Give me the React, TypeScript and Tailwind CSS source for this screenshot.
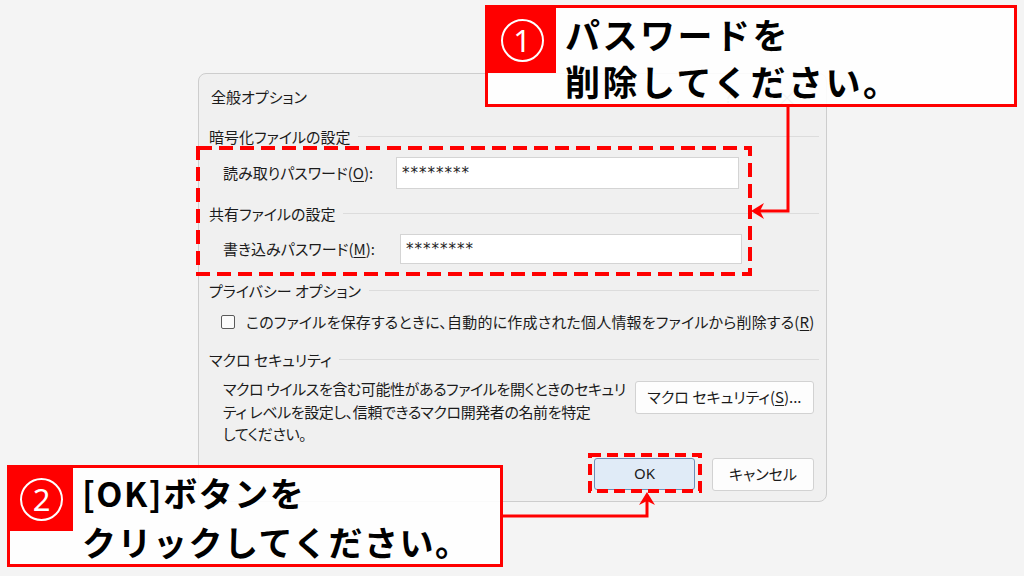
import React from "react";

const jp = "font-['Noto_Sans_CJK_JP','Noto_Sans',sans-serif]";

function Heading({ children, mt }: { children: React.ReactNode; mt: string }) {
  return (
    <div className={`flex items-center h-[20px] gap-[8px] ${mt}`}>
      <span className="text-[15px] text-[#1b1b1b] whitespace-nowrap leading-none">{children}</span>
      <div className="flex-1 h-px bg-[#dcdcdc]" />
    </div>
  );
}

function U({ children }: { children: React.ReactNode }) {
  return <span className="underline underline-offset-2 decoration-1">{children}</span>;
}

function Callout({
  num,
  lines,
  box,
  square,
  textPad,
  text,
  lh,
}: {
  num: string;
  lines: string[];
  box: string;
  square: string;
  textPad: string;
  text: string;
  lh: string;
}) {
  return (
    <div className={`absolute border-[3px] border-[#ff0000] bg-white/90 flex ${box}`}>
      <div className={`bg-[#ff0000] flex items-center justify-center shrink-0 ${square}`}>
        <div className="w-[43px] h-[43px] rounded-full border-2 border-white flex items-center justify-center text-white text-[31px] leading-none font-['Noto_Sans','Liberation_Sans',sans-serif]">
          {num}
        </div>
      </div>
      <div className={`${textPad} font-bold ${text} ${lh} text-black whitespace-nowrap`}>
        {lines.map((l, i) => (
          <div key={i}>{l}</div>
        ))}
      </div>
    </div>
  );
}

export default function App() {
  return (
    <div
      className={`relative w-[1024px] h-[576px] overflow-hidden bg-[#f4f4f4] ${jp}`}
    >
      {/* Dialog window */}
      <div className="absolute left-[198px] top-[73px] w-[629px] h-[429px] rounded-[8px] border border-[#cdcdcd] bg-[#f0f0f0] [font-feature-settings:'palt'] text-[#1b1b1b]">
        {/* title bar */}
        <div className="h-[44px] flex items-center pl-[12px] pr-[28px]">
          <span className="text-[15px] leading-none">全般オプション</span>
          <div className="flex-1" />
          <span className="text-[15px] text-[#8a8a8a] leading-none mr-[44px]">?</span>
          <span className="text-[22px] text-[#8a8a8a] leading-none font-light">×</span>
        </div>
        <div className="pl-[10px] pr-[7px] flex flex-col">
          <Heading mt="mt-[8px]">暗号化ファイルの設定</Heading>
          <div className="flex items-center h-[32px] mt-[11px] pl-[14px]">
            <div className="w-[173px] text-[15px] whitespace-nowrap">
              読み取りパスワード(<U>O</U>):
            </div>
            <div className="w-[343px] h-[32px] bg-white border border-[#d4d4d4] flex items-center pl-[5px] text-[15px] tracking-[1px] font-['DejaVu_Sans',sans-serif]">
              ********
            </div>
          </div>
          <Heading mt="mt-[14px]">共有ファイルの設定</Heading>
          <div className="flex items-center h-[30px] mt-[11px] pl-[14px]">
            <div className="w-[177px] text-[15px] whitespace-nowrap">
              書き込みパスワード(<U>M</U>):
            </div>
            <div className="w-[342px] h-[30px] bg-white border border-[#d4d4d4] flex items-center pl-[5px] text-[15px] tracking-[1px] font-['DejaVu_Sans',sans-serif]">
              ********
            </div>
          </div>
          <Heading mt="mt-[16px]">プライバシー オプション</Heading>
          <div className="flex items-center h-[20px] mt-[12px] pl-[12px] gap-[11px]">
            <div className="w-[14px] h-[14px] rounded-[2px] border border-[#5a5a5a] bg-[#fbfbfb]" />
            <span className="text-[15px] whitespace-nowrap tracking-[0.2px]">
              このファイルを保存するときに、自動的に作成された個人情報をファイルから削除する(<U>R</U>)
            </span>
          </div>
          <Heading mt="mt-[17px]">マクロ セキュリティ</Heading>
          <div className="flex mt-[9px] pl-[14px] pr-[5px]">
            <div className="flex-1 text-[15px] leading-[22.5px] whitespace-nowrap tracking-[-0.4px]">
              <div>マクロ ウイルスを含む可能性があるファイルを開くときのセキュリ</div>
              <div>ティ レベルを設定し、信頼できるマクロ開発者の名前を特定</div>
              <div>してください。</div>
            </div>
            <div className="mt-[3px] w-[179px] h-[33px] rounded-[3px] border border-[#d2d2d2] bg-[#fdfdfd] flex items-center justify-center text-[15px] whitespace-nowrap">
              マクロ セキュリティ(<U>S</U>)...
            </div>
          </div>
          <div className="flex justify-end gap-[17px] mt-[12px] pr-[5px]">
            <div className="w-[101px] h-[32px] rounded-[3px] border border-[#6d8fb8] bg-[#e0ebf7] flex items-center justify-center text-[15px] font-['Noto_Sans',sans-serif]">
              OK
            </div>
            <div className="w-[102px] h-[33px] rounded-[3px] border border-[#d2d2d2] bg-[#fdfdfd] flex items-center justify-center text-[15px]">
              キャンセル
            </div>
          </div>
        </div>
      </div>

      {/* annotation drawing */}
      <svg className="absolute left-0 top-0 pointer-events-none" width="1024" height="576" viewBox="0 0 1024 576">
        <rect x="198" y="148" width="552" height="126" fill="none" stroke="#ff0000" strokeWidth="4" strokeDasharray="14 7" />
        <rect x="590" y="455" width="110" height="36" fill="none" stroke="#ff0000" strokeWidth="4" strokeDasharray="11 6" />
        <polyline points="788,106 788,211 760,211" fill="none" stroke="#ff0000" strokeWidth="3" />
        <polygon points="751,211 764,203 760,211 764,219" fill="#ff0000" />
        <polyline points="502,516 647,516 647,501" fill="none" stroke="#ff0000" strokeWidth="3" />
        <polygon points="647,492 639,505 647,501 655,505" fill="#ff0000" />
      </svg>

      <Callout
        num="1"
        lines={["パスワードを", "削除してください。"]}
        box="left-[485px] top-[5px] w-[532px] h-[102px]"
        square="w-[68px] h-[65px]"
        textPad="pl-[9px] pt-[2px]"
        text="text-[35px] tracking-[2.5px]"
        lh="leading-[47px]"
      />
      <Callout
        num="2"
        lines={["[OK]ボタンを", "クリックしてください。"]}
        box="left-[7px] top-[465px] w-[496px] h-[102px]"
        square="w-[63px] h-[63px]"
        textPad="pl-[9px] pt-[0px]"
        text="text-[34px] tracking-[1.5px]"
        lh="leading-[49px]"
      />
    </div>
  );
}
